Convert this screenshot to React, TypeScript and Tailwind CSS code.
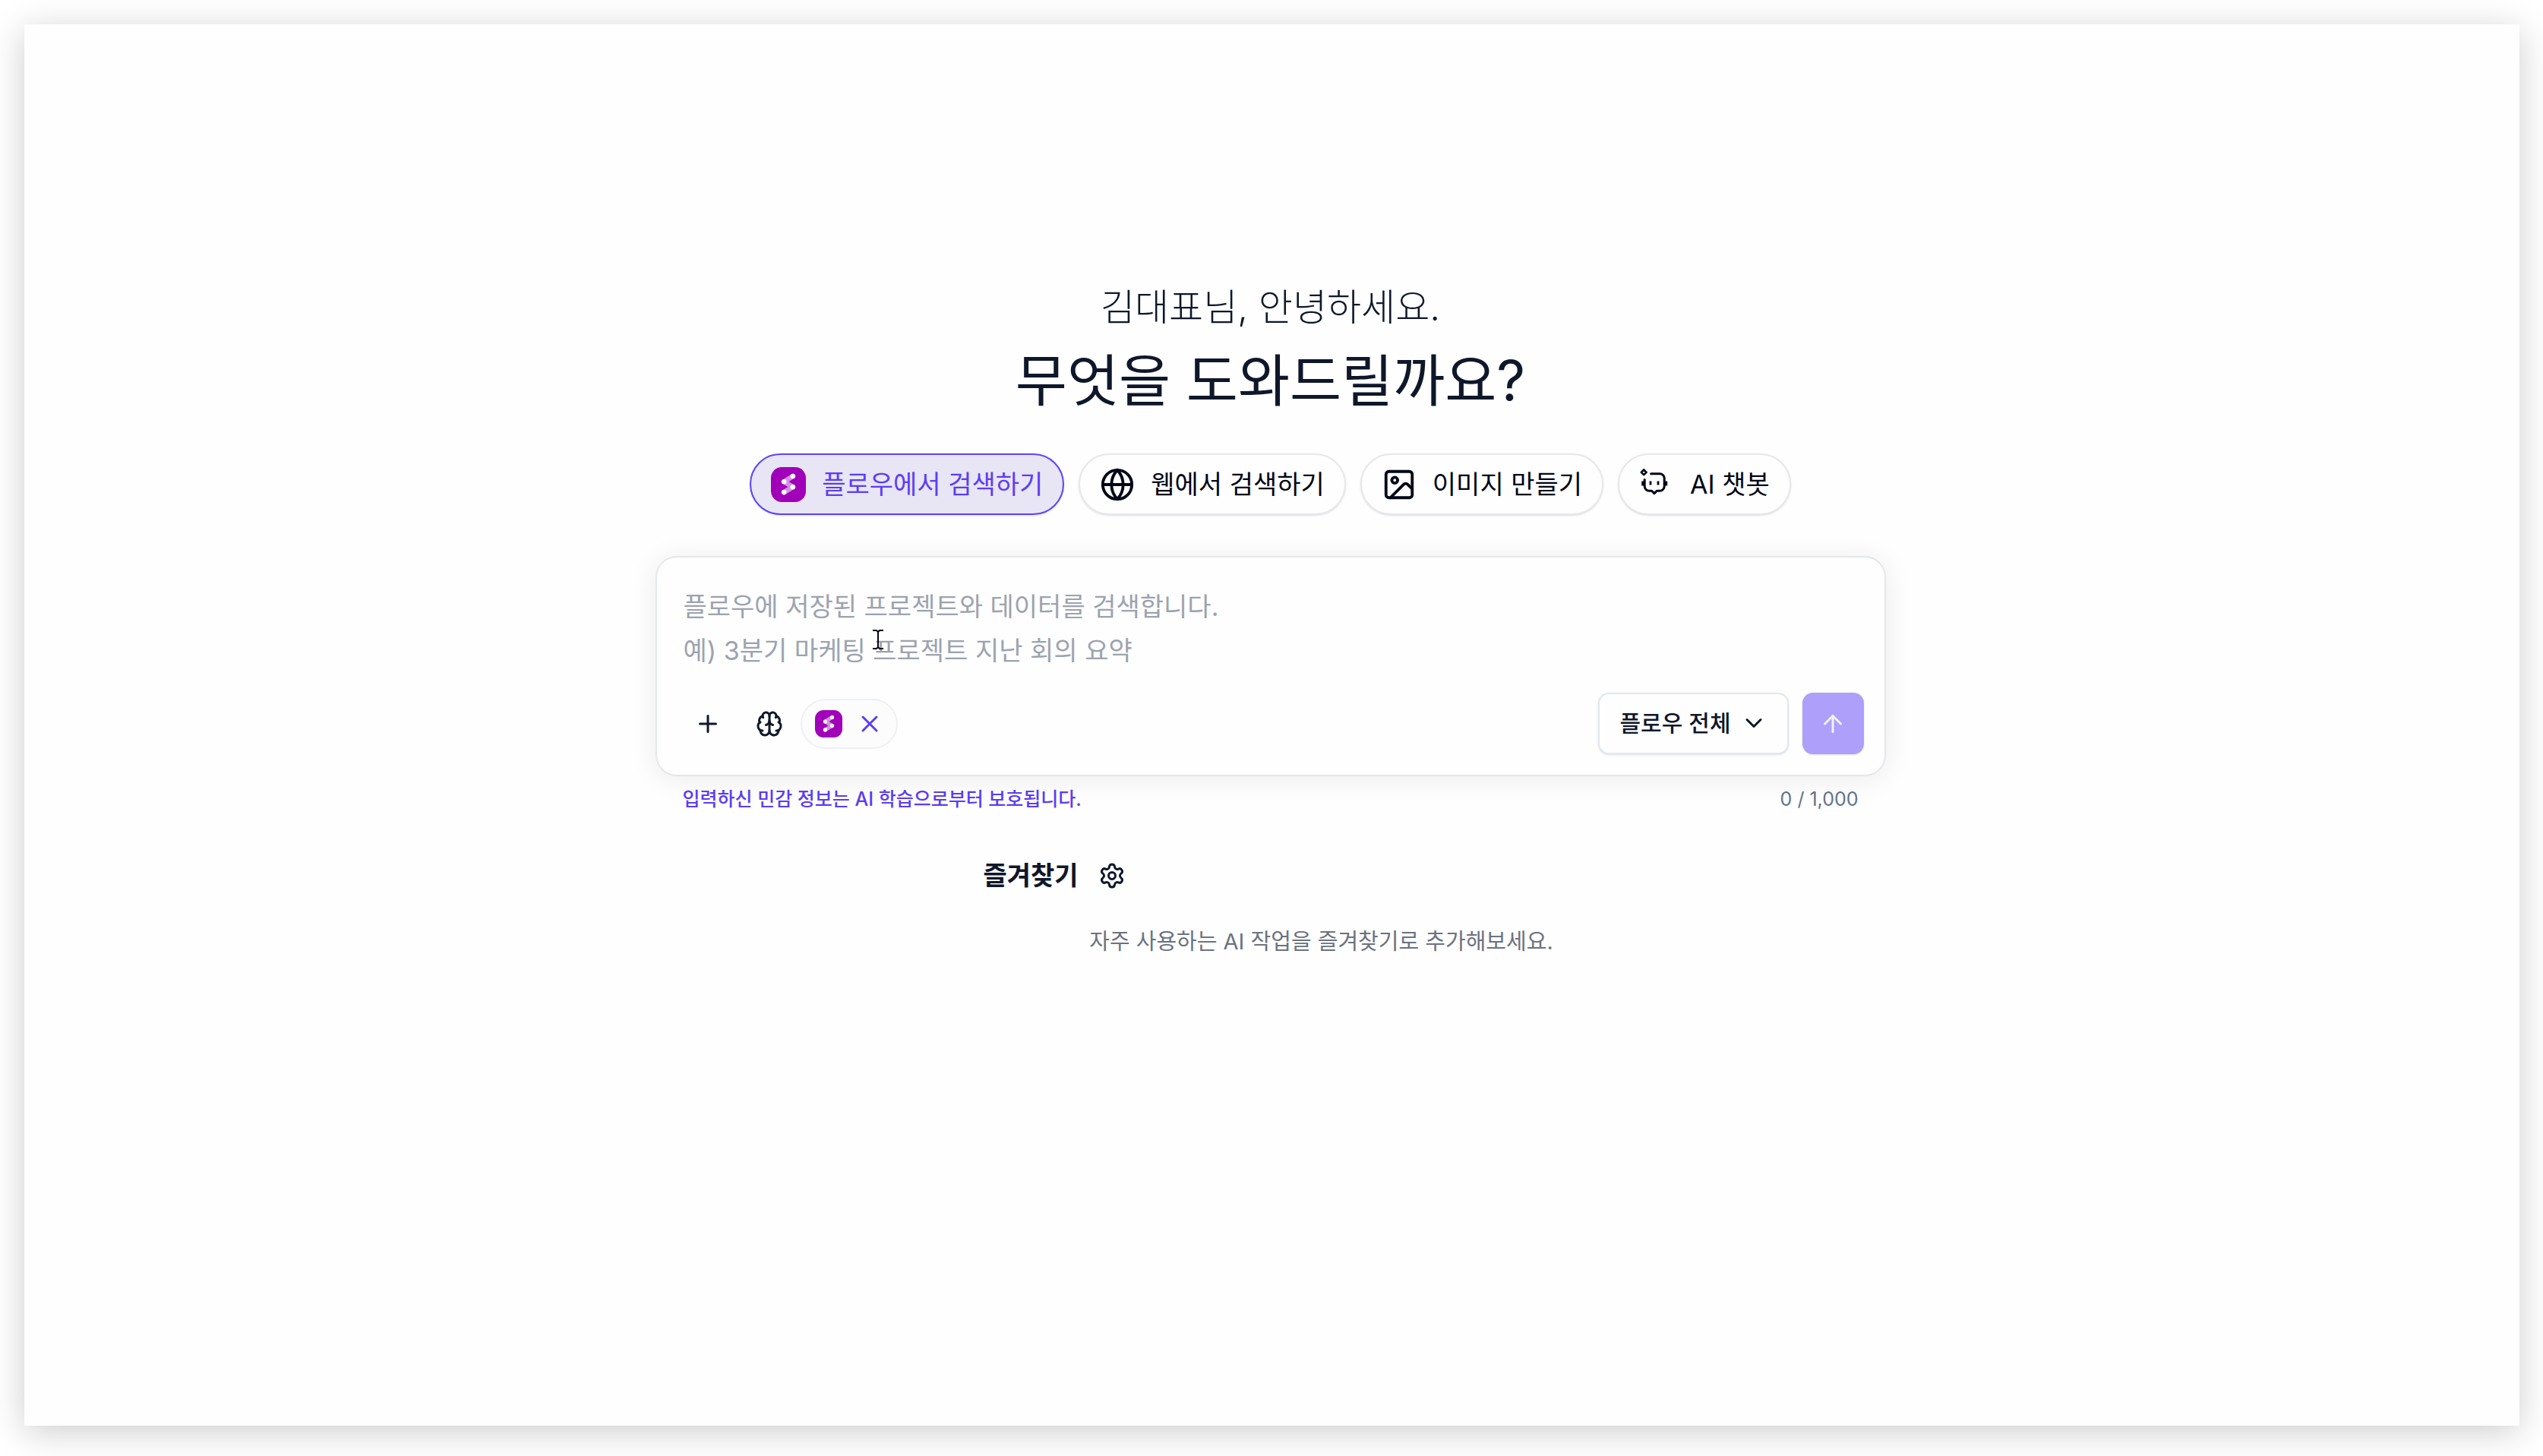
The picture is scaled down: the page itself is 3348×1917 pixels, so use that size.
import { useState } from 'react';
import type { ReactNode } from 'react';
import { ArrowUp, Brain, ChevronDown, Globe, Image as ImageIcon, Plus, Settings, X } from 'lucide-react';

const MAX_LENGTH = 1000;

const PLACEHOLDER = '플로우에 저장된 프로젝트와 데이터를 검색합니다.\n예) 3분기 마케팅 프로젝트 지난 회의 요약';

function FlowIcon({ className }: { className?: string }) {
    return (
        <svg viewBox="0 0 45 45" className={className} aria-hidden="true">
            <rect width="45" height="45" rx="14" fill="#a000b8" />
            <path
                d="M28.2 11.8 16.8 18.8 28.2 25.6 16.8 32.4"
                fill="none"
                stroke="#d591e3"
                strokeWidth="6.4"
                strokeLinecap="round"
                strokeLinejoin="round"
            />
            <circle cx="28.2" cy="11.8" r="3.2" fill="#fff" />
            <circle cx="16.8" cy="18.8" r="3.2" fill="#fff" />
            <circle cx="28.2" cy="25.6" r="3.2" fill="#fff" />
            <circle cx="16.8" cy="32.4" r="3.2" fill="#fff" />
        </svg>
    );
}

function ChatbotIcon({ className }: { className?: string }) {
    return (
        <svg
            viewBox="0 0 46 46"
            className={className}
            fill="none"
            stroke="currentColor"
            strokeWidth="3"
            strokeLinecap="round"
            strokeLinejoin="round"
            aria-hidden="true"
        >
            <path d="M15.6 8.8h11.6a6 6 0 0 1 6 6v10.4a6 6 0 0 1-6 6h-3.8L20 34.6l-3.4-3.4h-3.4a6 6 0 0 1-6-6V16.6" />
            <path d="m6.2 3.4 3.4 3.4-3.4 3.4-3.4-3.4z" strokeWidth="2.6" />
            <path d="M4.8 18.6v6M35.6 18.6v6" strokeWidth="3.2" strokeLinecap="butt" />
            <path d="M15 18.6v5M25 18.6v5" strokeWidth="2.8" strokeLinecap="butt" />
        </svg>
    );
}

const MODES: { id: string; label: string; icon: ReactNode }[] = [
    { id: 'flow', label: '플로우에서 검색하기', icon: <FlowIcon className="size-[46px]" /> },
    { id: 'web', label: '웹에서 검색하기', icon: <Globe className="size-[46px]" /> },
    { id: 'image', label: '이미지 만들기', icon: <ImageIcon className="size-[46px]" /> },
    { id: 'chatbot', label: 'AI 챗봇', icon: <ChatbotIcon className="size-[46px]" /> }
];

export default function App() {
    const [mode, setMode] = useState('flow');
    const [text, setText] = useState('');

    return (
        <div className="flex min-h-screen bg-white pt-8 pr-[31px] pb-10 pl-8 font-['Inter','Noto_Sans_CJK_KR',sans-serif] text-[#0f172a]">
            <main className="flex flex-1 flex-col items-center bg-[#fefefe] pt-[337px] pr-1 shadow-[0_8px_44px_rgba(0,0,0,0.2)]">
                <p className="text-[49px] leading-[72px] font-light">김대표님, 안녕하세요.</p>
                <h1 className="mt-3 text-[74px] leading-[96px] font-normal">무엇을 도와드릴까요?</h1>

                <div className="mt-12 flex flex-wrap justify-center gap-[19px]">
                    {MODES.map((item) => (
                        <button
                            key={item.id}
                            type="button"
                            aria-pressed={mode === item.id}
                            onClick={() => setMode(item.id)}
                            className={`flex h-[81px] items-center gap-[21px] rounded-full border-2 px-[26px] text-[34px] leading-[50px] shadow-sm ${
                                mode === item.id
                                    ? 'border-[#5f42fa] bg-[#e8e5f5] text-[#5b3df5]'
                                    : 'border-[#e8e8ec] bg-[#fefefe] text-[#020617]'
                            }`}
                        >
                            {item.icon}
                            {item.label}
                        </button>
                    ))}
                </div>

                <div className="mt-[54px] w-full max-w-[1620px]">
                    <form
                        onSubmit={(e) => e.preventDefault()}
                        className="relative rounded-[28px] border-2 border-[#e5e7eb] bg-[#fefefe] px-[27px] pt-9 pb-[27px] shadow-[0_4px_36px_rgba(0,0,0,0.08)]"
                    >
                        <textarea
                            aria-label="질문 입력"
                            rows={2}
                            maxLength={MAX_LENGTH}
                            value={text}
                            onChange={(e) => setText(e.target.value)}
                            placeholder={PLACEHOLDER}
                            className="block w-full resize-none bg-transparent px-2 text-[34px] leading-[58px] outline-none placeholder:text-[#9ca3af]"
                        />
                        {/* text pointer */}
                        <svg
                            viewBox="0 0 14 26"
                            className="absolute top-[95px] left-[284px] h-[26px] w-[14px]"
                            fill="none"
                            stroke="#020617"
                            strokeWidth="2"
                            aria-hidden="true"
                        >
                            <path d="M0 1h5l2 2 2-2h5M7 2v22M0 25h5l2-2 2 2h5" />
                        </svg>

                        <div className="mt-[26px] flex items-center justify-between">
                            <div className="flex items-center">
                                <button type="button" aria-label="추가" className="flex size-[81px] items-center justify-center">
                                    <Plus className="size-9" />
                                </button>
                                <button type="button" aria-label="모델" className="flex size-[81px] items-center justify-center">
                                    <Brain className="size-9" />
                                </button>
                                <div className="flex h-[66px] items-center gap-[18px] rounded-full border-2 border-[#eef0f6] bg-[#fcfcfd] px-[17px]">
                                    <FlowIcon className="size-9" />
                                    <button type="button" aria-label="해제" className="text-[#5b3df5]">
                                        <X className="size-9" />
                                    </button>
                                </div>
                            </div>

                            <div className="flex items-center gap-[18px]">
                                <div className="relative">
                                    <select
                                        aria-label="검색 범위"
                                        className="h-[81px] appearance-none rounded-[14px] border-2 border-[#e2e8f0] bg-[#fefefe] pr-[74px] pl-[27px] text-[30px] font-medium shadow-sm"
                                    >
                                        <option>플로우 전체</option>
                                    </select>
                                    <ChevronDown className="pointer-events-none absolute top-[22px] right-7 size-9" />
                                </div>
                                <button
                                    type="submit"
                                    aria-label="보내기"
                                    className="flex size-[81px] items-center justify-center rounded-[14px] bg-[#ad9ffa] text-[#f3f0ff] shadow-sm"
                                >
                                    <ArrowUp className="size-9" />
                                </button>
                            </div>
                        </div>
                    </form>

                    <div className="mt-3 flex justify-between px-9 text-[25px] leading-9">
                        <p className="font-medium text-[#5b3df5]">입력하신 민감 정보는 AI 학습으로부터 보호됩니다.</p>
                        <p className="text-[#64748b]">
                            {text.length} / {MAX_LENGTH.toLocaleString('en-US')}
                        </p>
                    </div>

                    <section className="mt-[58px] pr-[298px] pl-[432px]">
                        <div className="flex items-center gap-[26px]">
                            <h2 className="text-[34px] leading-[50px] font-bold">즐겨찾기</h2>
                            <button type="button" aria-label="즐겨찾기 설정">
                                <Settings className="size-9" />
                            </button>
                        </div>
                        <p className="mt-10 text-center text-[29px] leading-[44px] text-[#6b7280]">
                            자주 사용하는 AI 작업을 즐겨찾기로 추가해보세요.
                        </p>
                    </section>
                </div>
            </main>
        </div>
    );
}
